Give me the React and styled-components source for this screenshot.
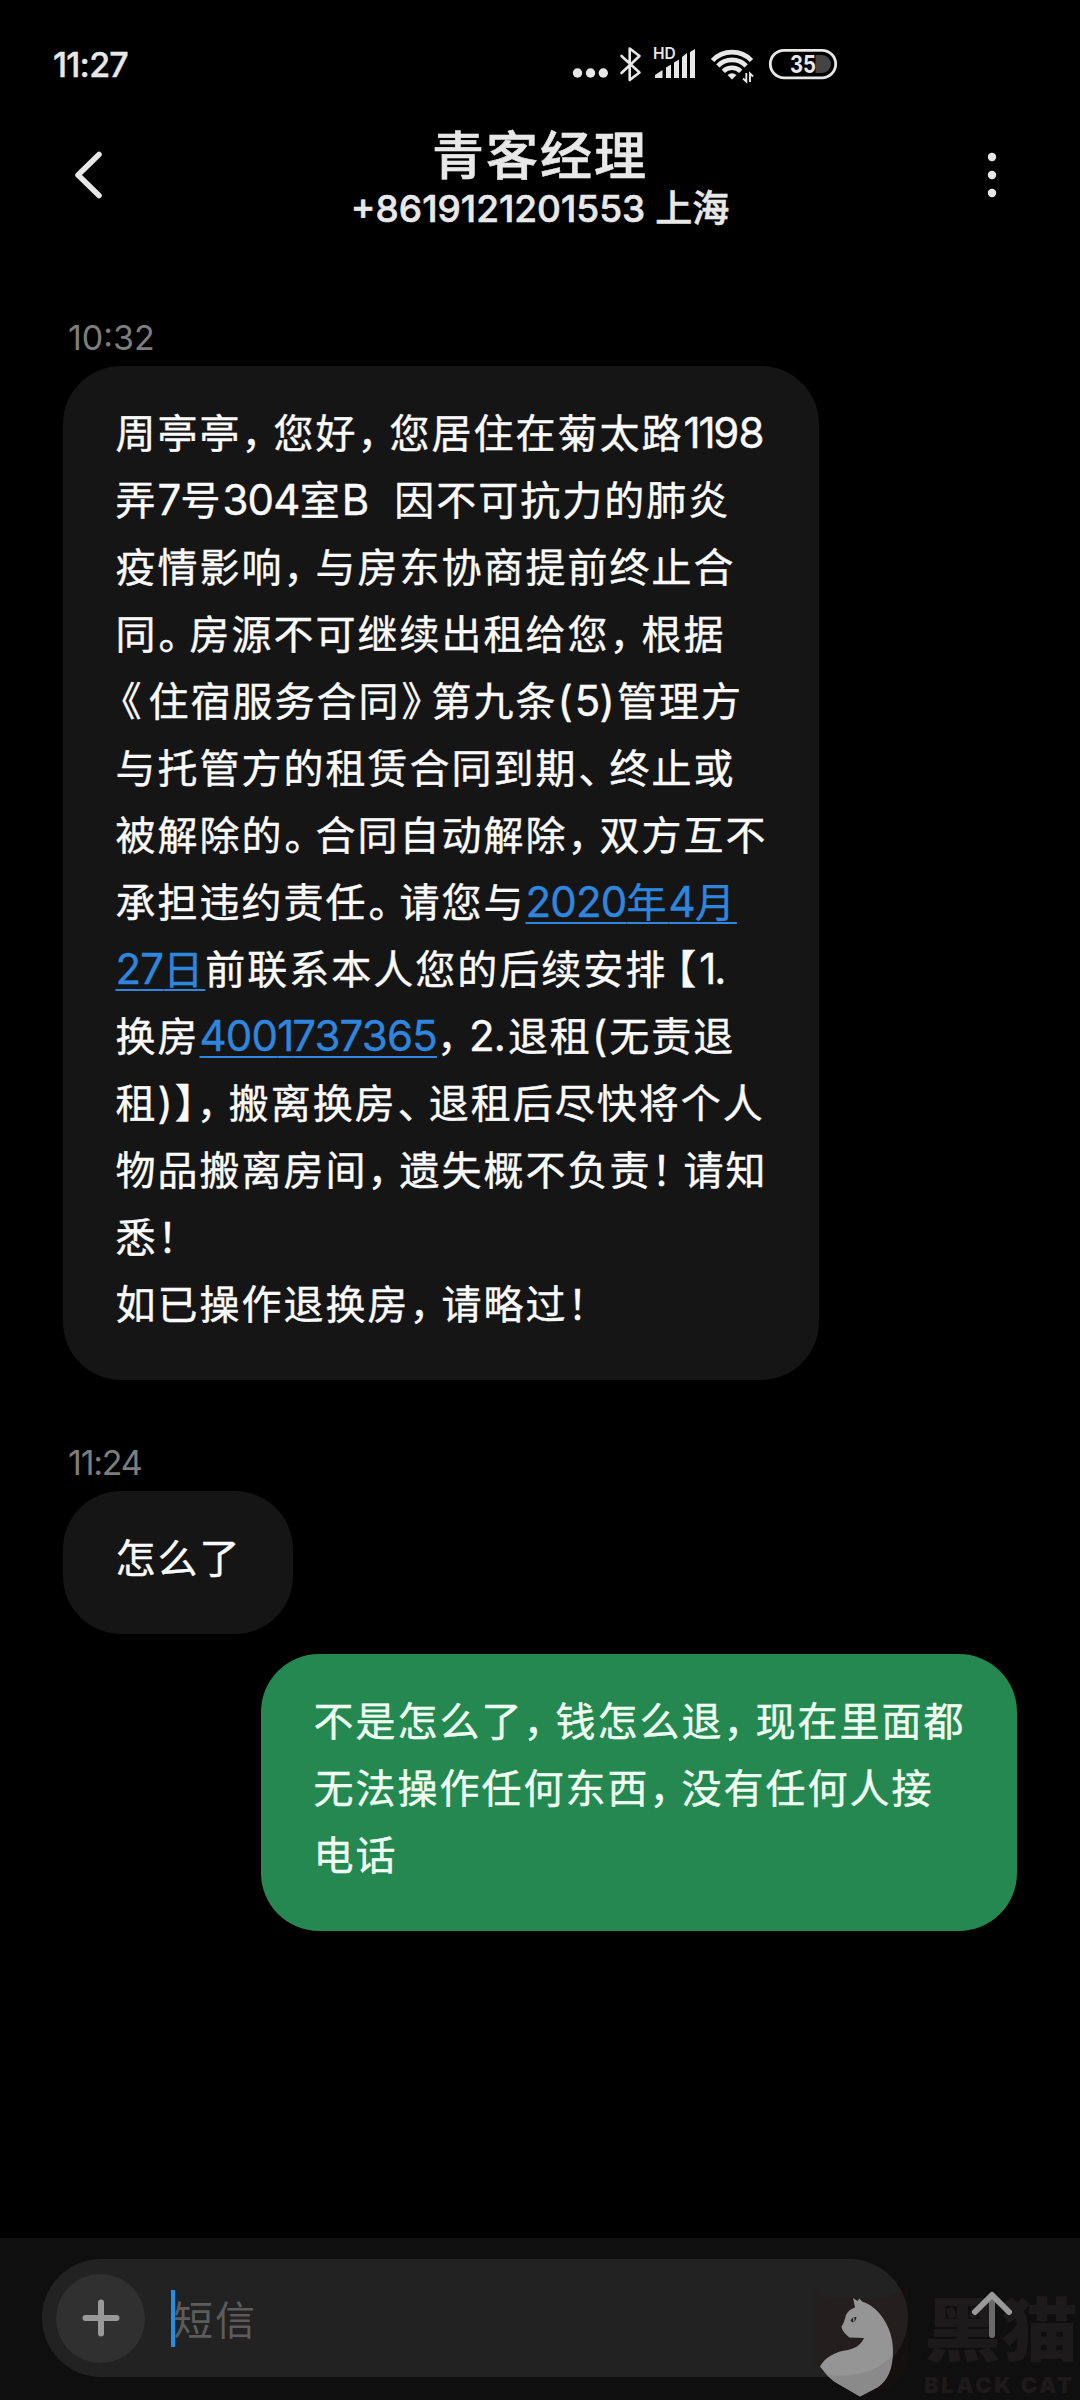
import React from "react";
import styled, { createGlobalStyle, css } from "styled-components";

const GlobalStyle = createGlobalStyle`
  body {
    margin: 0;
    background: #000;
  }
`;

const Screen = styled.div`
  position: relative;
  display: flex;
  flex-direction: column;
  width: 1080px;
  height: 2400px;
  overflow: hidden;
  background: #000;
  color: #e8e8e8;
  font-family: Inter, "Noto Sans CJK SC", sans-serif;
`;

const StatusBar = styled.div`
  display: flex;
  align-items: center;
  height: 128px;
  flex: none;
  padding-left: 53px;
  box-sizing: border-box;
`;

const Clock = styled.div`
  width: 517px;
  font-size: 34px;
  font-weight: 500;
  letter-spacing: -0.8px;
  -webkit-text-stroke: 0.4px;
`;

const Header = styled.header`
  display: flex;
  justify-content: space-between;
  height: 182px;
  flex: none;
  padding: 0 60px;
`;

const HeaderButton = styled.div`
  width: 56px;
  height: 94px;
  display: flex;
  align-items: center;
  justify-content: center;
`;

const Contact = styled.div`
  display: flex;
  flex-direction: column;
  align-items: center;
  -webkit-text-stroke: 0.6px;
`;

const Name = styled.div`
  height: 56px;
  line-height: 50px;
  font-size: 52px;
  font-weight: 500;
  letter-spacing: 2px;
  font-family: "Noto Sans CJK SC", sans-serif;
`;

const Phone = styled.div`
  height: 50px;
  line-height: 50px;
  font-size: 37px;
  font-weight: 500;
  white-space: nowrap;
`;

const Thread = styled.main`
  flex: 1;
  display: flex;
  flex-direction: column;
  align-items: flex-start;
  padding: 0 63px;
`;

const Time = styled.div`
  height: 56px;
  line-height: 56px;
  padding-left: 5px;
  margin-top: ${(p) => p.$top || 0}px;
  font-size: 34px;
  letter-spacing: ${(p) => p.$gap || 0}px;
  color: #7d7d7d;
`;

const Bubble = styled.div`
  box-sizing: border-box;
  padding: 32px 52px 44px 52.5px;
  border-radius: 58px;
  background: #151515;
  color: #fafafa;
  font-size: 40px;
  line-height: 67px;
  letter-spacing: 2px;
  white-space: pre;
  font-family: "Noto Sans CJK SC", sans-serif;
  text-spacing-trim: space-all;
  -webkit-text-stroke: 0.4px;
  width: ${(p) => p.$width}px;
  margin-top: ${(p) => p.$top || 0}px;
  ${(p) =>
    p.$mine &&
    css`
      align-self: flex-end;
      background: #248850;
      color: #effff2;
    `}
`;

const Line = styled.div`
  height: 67px;
`;

const Latin = styled.span`
  font-family: Inter, sans-serif;
  font-size: 42px;
  letter-spacing: ${(p) => p.$gap}px;
`;

const Link = styled.span`
  color: #2e86de;
  text-decoration: underline;
  text-decoration-thickness: 2px;
  text-underline-offset: 5px;
  text-decoration-skip-ink: none;
`;

const Mark = styled.span`
  display: inline-block;
  box-sizing: border-box;
  width: ${(p) => p.$width}px;
  padding-left: ${(p) => p.$shift}px;
  letter-spacing: 0;
  font-feature-settings: "halt";
`;

const Composer = styled.footer`
  display: flex;
  align-items: center;
  justify-content: space-between;
  flex: none;
  height: 162px;
  box-sizing: border-box;
  padding: 0 60px 2px 42px;
  background: #0f0f0f;
`;

const Field = styled.div`
  display: flex;
  align-items: center;
  width: 866px;
  height: 118px;
  box-sizing: border-box;
  padding-left: 14px;
  border-radius: 59px;
  background: #222;
`;

const AddButton = styled.div`
  display: flex;
  align-items: center;
  justify-content: center;
  width: 89px;
  height: 89px;
  border-radius: 50%;
  background: #303030;
`;

const Caret = styled.div`
  width: 4px;
  height: 57px;
  margin: 0 -2px 0 26px;
  background: #1f8fea;
  z-index: 1;
`;

const Placeholder = styled.div`
  font-size: 40px;
  letter-spacing: 2px;
  color: #5c5c5c;
  font-family: "Noto Sans CJK SC", sans-serif;
`;

const SendButton = styled.div`
  position: relative;
  z-index: 2;
  display: flex;
  width: 56px;
  justify-content: center;
  padding-bottom: 6px;
`;

const Watermark = styled.div`
  position: absolute;
  left: 810px;
  bottom: 0;
  width: 270px;
  height: 116px;
  display: flex;
`;

const Brand = styled.div`
  padding-left: 4px;
  white-space: nowrap;
  color: #1d1a1b;
  font-weight: 900;
`;

const BrandName = styled.div`
  height: 84px;
  line-height: 84px;
  font-size: 77px;
  font-family: "Noto Sans CJK SC", sans-serif;
  transform: scaleY(0.9);
`;

const BrandLatin = styled.div`
  height: 24px;
  line-height: 34px;
  font-size: 22px;
  letter-spacing: 2.6px;
`;

// advance and left padding of the punctuation that is narrower than a full cell
const MARKS = {
  "，": [32, 0],
  "。": [32, 1],
  "、": [32, 1],
  "！": [32, 0],
  "《": [33, 6],
  "》": [31, 1],
  "【": [32, 9],
  "】": [22, 0],
};

const GAPS = { "(": 2, ")": 2, ".": 2 };

// digits are proportional, "1" sits closer to its neighbours
function Runs({ text }) {
  const parts = text.match(/[，。、！《》【】]|1+|B +|[02-9]+|[().]|[^，。、！《》【】0-9B.()]+/g);
  return parts.map((part, i) => {
    if (MARKS[part]) {
      return (
        <Mark key={i} $width={MARKS[part][0]} $shift={MARKS[part][1]}>
          {part}
        </Mark>
      );
    }
    if (/^1/.test(part)) return <Latin key={i} $gap={-2.2}>{part}</Latin>;
    if (/^B/.test(part)) return <Latin key={i} $gap={0.5}>{part}</Latin>;
    if (GAPS[part]) return <Latin key={i} $gap={GAPS[part]}>{part}</Latin>;
    if (/^[0-9]/.test(part)) return <Latin key={i} $gap={-0.8}>{part}</Latin>;
    return <span key={i}>{part}</span>;
  });
}

function Message({ lines, ...rest }) {
  return (
    <Bubble {...rest}>
      {lines.map((line, i) => (
        <Line key={i}>
          {line.split("|").map((piece, j) =>
            j % 2 ? (
              <Link key={j}>
                <Runs text={piece} />
              </Link>
            ) : (
              piece && <Runs key={j} text={piece} />
            )
          )}
        </Line>
      ))}
    </Bubble>
  );
}

// text between bars is a link
const notice = [
  "周亭亭，您好，您居住在菊太路1198",
  "弄7号304室B  因不可抗力的肺炎",
  "疫情影响，与房东协商提前终止合",
  "同。房源不可继续出租给您，根据",
  "《住宿服务合同》第九条(5)管理方",
  "与托管方的租赁合同到期、终止或",
  "被解除的。合同自动解除，双方互不",
  "承担违约责任。请您与|2020年4月|",
  "|27日|前联系本人您的后续安排【1.",
  "换房|4001737365|，2.退租(无责退",
  "租)】，搬离换房、退租后尽快将个人",
  "物品搬离房间，遗失概不负责！请知",
  "悉！",
  "如已操作退换房，请略过！",
];

const reply = [
  "不是怎么了，钱怎么退，现在里面都",
  "无法操作任何东西，没有任何人接",
  "电话",
];

function StatusIcons() {
  return (
    <svg width="270" height="40" viewBox="570 44 270 40" fill="#e8e8e8">
      <circle cx="577.5" cy="73" r="4.7" />
      <circle cx="590.5" cy="73" r="4.7" />
      <circle cx="603.3" cy="73" r="4.7" />
      <path d="M621.5 56 639.5 72.5 629.7 80V48.5L639.5 56 621.5 73" fill="none" stroke="#e8e8e8" strokeWidth="2.6" strokeLinejoin="round" strokeLinecap="round" />
      <text x="653" y="59" fontSize="15.5" fontWeight="600" fontFamily="Inter, sans-serif">HD</text>
      <path d="M655 75 662.5 70V78H655ZM666 67.5 671 64.5V78H666ZM674 62.5 679 59.5V78H674ZM682 57 687 53V78H682ZM690 52 695 49V78H690Z" />
      <g fill="none" stroke="#e8e8e8" strokeWidth="4.6">
        <path d="M712.5 60.5A27 27 0 0 1 751.5 60.5" />
        <path d="M717.8 65.8A20 20 0 0 1 746.2 65.8" />
        <path d="M723.3 71.3A12.5 12.5 0 0 1 740.7 71.3" />
      </g>
      <path d="M727.5 75Q732 71.5 736.5 75L732 79.5Z" />
      <path d="M746.3 73V81.5L743 78.5M750 82V73.5L753 76.5" fill="none" stroke="#e8e8e8" strokeWidth="1.9" />
      <path d="M815.5 55H822A9 9 0 0 1 822 73H815.5Z" fill="#444" />
      <rect x="770.3" y="50.3" width="65.4" height="27.6" rx="13.8" fill="none" stroke="#e8e8e8" strokeWidth="2.8" />
      <text x="790" y="73" fontSize="24" fontWeight="700" fontFamily="Inter, sans-serif" textLength="26" lengthAdjust="spacingAndGlyphs">35</text>
    </svg>
  );
}

const CatSvg = styled.svg`
  flex: none;
`;

function Cat() {
  return (
    <CatSvg width="110" height="116" viewBox="810 2284 110 116">
      <path d="M815 2289Q826 2300 840 2298H884L908 2288V2358Q906 2384 876 2392L860 2397 815 2366Z" fill="#2a1518" opacity="0.18" />
      <path
        d="M853 2298 857.5 2301 859.5 2298.5 862 2301.5C880 2307 893 2329 893 2350C893 2370 887 2381 878 2387L860 2396.5 835 2382C830 2379 824 2372 820 2366.5C824 2358 836 2351 848 2350C857 2348 862 2343 864 2338L849.5 2337.5C846 2335 842 2331 841.5 2326.5C844 2323 844.5 2320 846 2315C848 2311 851 2309 855 2307.5Z"
        fill="#959595"
      />
      <path d="M893 2354C891 2371 886 2381 878 2387L860 2396.5 835 2382 828 2375C855 2378 880 2371 893 2354Z" fill="#8a8a8a" />
      <path d="M850.5 2320.5Q852.5 2316.5 856.5 2317Q856 2321.5 852.5 2322.5Z" fill="#222" />
      <path d="M853.8 2317.5V2321.5" stroke="#999" strokeWidth="1.3" />
    </CatSvg>
  );
}

export default function App() {
  return (
    <Screen>
      <GlobalStyle />
      <StatusBar>
        <Clock>11:27</Clock>
        <StatusIcons />
      </StatusBar>
      <Header>
        <HeaderButton>
          <svg width="30" height="50" viewBox="0 0 30 50" fill="none" stroke="#e8e8e8" strokeWidth="5.5" strokeLinecap="round" strokeLinejoin="round">
            <path d="M26 4.5 5 25 26 45.5" />
          </svg>
        </HeaderButton>
        <Contact>
          <Name>青客经理</Name>
          <Phone>+8619121201553 上海</Phone>
        </Contact>
        <HeaderButton>
          <svg width="10" height="46" viewBox="0 0 10 46" fill="#e8e8e8">
            <circle cx="5" cy="5" r="4.2" />
            <circle cx="5" cy="23" r="4.2" />
            <circle cx="5" cy="41" r="4.2" />
          </svg>
        </HeaderButton>
      </Header>
      <Thread>
        <Time>10:32</Time>
        <Message lines={notice} $width={756} />
        <Time $top={55} $gap={-1.2}>11:24</Time>
        <Message lines={["怎么了"]} $width={230} />
        <Message lines={reply} $width={756} $top={20} $mine />
      </Thread>
      <Composer>
        <Field>
          <AddButton>
            <svg width="38" height="38" viewBox="0 0 38 38" stroke="#999" strokeWidth="6" strokeLinecap="round">
              <path d="M19 3.5V34.5M3.5 19H34.5" />
            </svg>
          </AddButton>
          <Caret />
          <Placeholder>短信</Placeholder>
        </Field>
        <SendButton>
          <svg width="42" height="50" viewBox="0 0 42 50" fill="none" stroke="#9a9a9a" strokeWidth="6" strokeLinecap="round" strokeLinejoin="round">
            <path d="M21 8V45" stroke="#6a6a6a" />
            <path d="M4 22 21 5 38 22" />
          </svg>
        </SendButton>
      </Composer>
      <Watermark>
        <Cat />
        <Brand>
          <BrandName>黑猫</BrandName>
          <BrandLatin>BLACK CAT</BrandLatin>
        </Brand>
      </Watermark>
    </Screen>
  );
}
